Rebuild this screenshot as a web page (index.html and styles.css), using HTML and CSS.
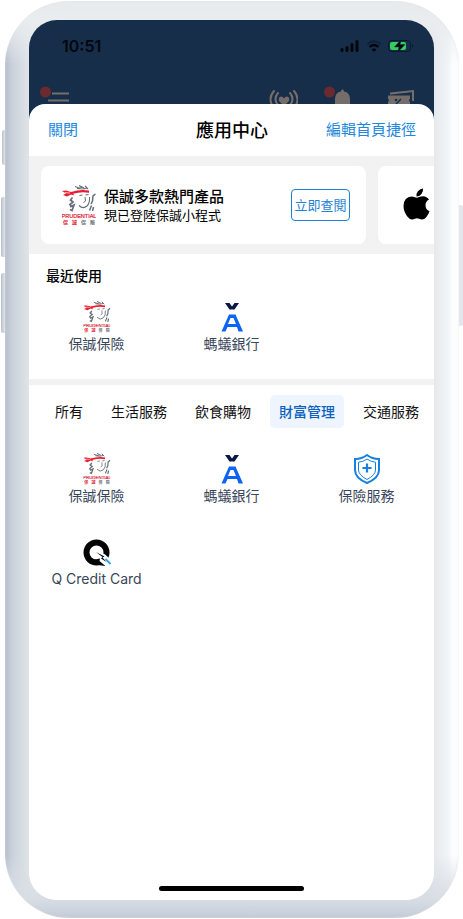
FILE: index.html
```html
<!DOCTYPE html>
<html lang="zh-Hant">
<head>
<meta charset="utf-8">
<meta name="viewport" content="width=device-width, initial-scale=1">
<title>應用中心</title>
<link rel="stylesheet" href="styles.css">
</head>
<body>
<svg class="sprite" aria-hidden="true">
  <symbol id="pru" viewBox="0 0 34 40">
    <g fill="none" stroke="#666e78">
      <path d="M13 1.500l4 1.500 3-.5M17 .5l5 2.500M15 3.500l6 .5 4-1M23 1l3 3" stroke-width="1.200"/>
      <path d="M10.500 12.500l-2 2.500 2.500 2-3 2.500 1 2 3-1.500-2 5.500-2-1" stroke-width="1.700"/>
      <path d="M17.500 10.500l3-.5M23.500 10l3-.5M23 12l.5 4-2 1.500" stroke-width="1"/>
      <path d="M17 20.500q4 4 8 .5 3-3 2.500-9" stroke-width="1.100"/>
      <path d="M33.500 9l-2.500 2-.5 5-1.500 3M29.500 20.500l-2 5M31.500 22l-1 4" stroke-width="1.500"/>
    </g>
    <path d="M0 6l4-.5 5 1.500q9-3 18-1.500v2.300q-8-1.500-16 1l1.500 1.700-3.500-1-4 2-4-1.500 3-1.500z" fill="#ed1b2e"/>
    <path d="M3 7.500l5 .6" stroke="#fff" stroke-width=".7"/>
    <text x="17" y="33" text-anchor="middle" class="pru-name">PRUDENTIAL</text>
    <text x="1" y="38.500" class="pru-sub">保</text>
    <text x="10" y="38.500" class="pru-sub">誠</text>
    <text x="19" y="38.500" class="pru-sub pru-dim">保</text>
    <text x="28" y="38.500" class="pru-sub pru-dim">險</text>
  </symbol>
  <symbol id="ant" viewBox="0 0 32 32">
    <path d="M9 2h4.500l2.500 3.500L18.500 2H23l-4.500 6.500h-5z" fill="#0b1746"/>
    <path fill-rule="evenodd" d="M13 13.500h6.500L27 30.500h-4.500L21 26h-9.500l-2 4.500H5.500zM14.500 17l-2.500 6h8l-2.500-6z" fill="#0d63f3"/>
  </symbol>
</svg>

<div class="phone">
  <span class="key key-mute"></span>
  <span class="key key-up"></span>
  <span class="key key-down"></span>
  <span class="key key-power"></span>
  <div class="screen">
    <div class="backdrop">
      <div class="status">
        <time>10:51</time>
        <div class="status-icons">
          <svg width="20" height="14" viewBox="0 0 20 14"><path d="M2 11.500v-1M7 11.500V8.500M12 11.500V5.500M17 11.500V2.500" stroke="#02070d" stroke-width="3" stroke-linecap="round"/></svg>
          <svg width="16" height="14" viewBox="0 0 16 14"><path d="M1.500 5q6.500-5.500 13 0" fill="none" stroke="#0c2036" stroke-width="2"/><path d="M3.500 8q4.500-4 9 0" fill="none" stroke="#02070d" stroke-width="2.200"/><path d="M5.500 10.500q2.500-2 5 0L8 13z" fill="#02070d"/></svg>
          <svg width="26" height="14" viewBox="0 0 26 14"><rect x=".5" y="1.500" width="22" height="11" rx="3.500" fill="none" stroke="#0a1a2c"/><path d="M24 5q2 2 0 4z" fill="#0a1a2c"/><rect x="2" y="3" width="16" height="8" rx="2" fill="#35cc62"/><path d="M13.500 0L6.500 8h4.500l-1.500 5.500L17 5.500h-5z" fill="#02070d" stroke="#14304c" stroke-width=".5"/></svg>
        </div>
      </div>
      <div class="nav">
        <svg width="30" height="20" viewBox="0 0 30 20"><circle cx="5.500" cy="6" r="5.500" fill="#6b2a2d"/><path d="M12 7.500h17M8 14.500h21" stroke="#746d6a" stroke-width="2"/></svg>
        <svg class="nav-heart" width="30" height="20" viewBox="0 0 30 20"><g fill="none" stroke="#746d6a" stroke-width="2" stroke-linecap="round"><path d="M6 5q-7 8 0 17M10 7q-5 6 0 12M26 5q7 8 0 17M22 7q5 6 0 12"/></g><path d="M16 20l-5-5q-1-4 2-4.500 2 0 3 2 1-2 3-2 3 .5 2 4.500z" fill="#746d6a"/></svg>
        <svg width="37" height="20" viewBox="0 0 37 20"><path d="M17 5.500q0-2 1.500-2t1.500 2q6 1 6 7.500v7H11v-7q0-6.500 6-7.500z" fill="#746d6a"/><circle cx="5.500" cy="6" r="5.500" fill="#6b2a2d"/></svg>
        <svg width="27" height="20" viewBox="0 0 27 20"><path d="M4 8.500V7.500L26 5v10" fill="none" stroke="#746d6a" stroke-width="2"/><path d="M1 9.500h22v3.500q-2 1 0 3v5H1v-5q2-2 0-3z" fill="#746d6a"/><path d="M9 18l5-5" stroke="#162e4a" stroke-width="1.500"/><circle cx="9" cy="14" r="1.300" fill="#162e4a"/></svg>
      </div>
    </div>

    <main class="sheet">
      <header class="bar">
        <button type="button" class="link">關閉</button>
        <h1>應用中心</h1>
        <button type="button" class="link">編輯首頁捷徑</button>
      </header>

      <section class="promos">
        <article class="promo">
          <svg class="promo-logo" viewBox="0 0 34 40"><use href="#pru"/></svg>
          <div class="promo-text">
            <h2>保誠多款熱門產品</h2>
            <p>現已登陸保誠小程式</p>
          </div>
          <button type="button" class="view">立即查閱</button>
        </article>
        <article class="promo promo-next">
          <svg width="28" height="34" viewBox="0 0 28 34"><path d="M20 .5q.5 3-1.500 5.500t-5 2.500q-.5-3 1.500-5.300T20 .5z"/><path d="M26 11.500q-3.500 2-3.500 5.700 0 4.300 4 6-1 3.300-3.300 6Q21.500 31.500 19 31.500q-1.500 0-3-.8-2-.8-4 0-1.500.8-3 .8-2.500 0-4.700-3Q.5 23.500.5 18q0-4.500 2.300-7T8.500 8.500q1.500 0 3.500.8 1.800.8 3.500 0Q18 8.300 20 8.300q4 .2 6 3.200z"/></svg>
        </article>
      </section>

      <section class="recent">
        <h2>最近使用</h2>
        <div class="apps">
          <a class="app" href="#"><svg viewBox="0 0 34 40"><use href="#pru"/></svg><span>保誠保險</span></a>
          <a class="app" href="#"><svg viewBox="0 0 32 32"><use href="#ant"/></svg><span>螞蟻銀行</span></a>
        </div>
      </section>

      <section class="catalog">
        <nav class="tabs">
          <button type="button">所有</button>
          <button type="button">生活服務</button>
          <button type="button">飲食購物</button>
          <button type="button" class="active">財富管理</button>
          <button type="button">交通服務</button>
        </nav>
        <div class="apps">
          <a class="app" href="#"><svg viewBox="0 0 34 40"><use href="#pru"/></svg><span>保誠保險</span></a>
          <a class="app" href="#"><svg viewBox="0 0 32 32"><use href="#ant"/></svg><span>螞蟻銀行</span></a>
          <a class="app" href="#"><svg viewBox="0 0 32 32" fill="none" stroke="#1680dc"><path d="M16 2q5 4 12 4v11q0 8-12 13Q4 25 4 17V6q7 0 12-4z" stroke-width="2"/><path d="M16 6q4 3 8.500 3.200V17q0 5-8.500 9.500Q7.500 22 7.500 17V9.200Q12 9 16 6z"/><path d="M16 10.500v9M11.500 15h9" stroke-width="2.200"/></svg><span>保險服務</span></a>
          <a class="app" href="#"><svg viewBox="0 0 32 32"><circle cx="15.500" cy="15.500" r="10" fill="none" stroke="#050505" stroke-width="6"/><path d="M12 15l6-1 6 3.500 8 7-3 5-10 2z" fill="#fff"/><path d="M15 15l8.500 4.500-2 1 4 4.500-5.500-3.500 1.500-1.500z" fill="#050505"/><path d="M14 22.500l5-1-.5 2.500 6 5-8-1z" fill="#050505"/><path d="M24.500 22l5 5" stroke="#27a9e8" stroke-width="1.800"/></svg><span class="latin">Q Credit Card</span></a>
        </div>
      </section>
      <div class="home"></div>
    </main>
  </div>
</div>
</body>
</html>
```

FILE: styles.css
```css
* { box-sizing: border-box; }

body {
  margin: 0;
  background: #fff;
  color: #000;
  font-family: "Noto Sans CJK TC", sans-serif;
}

h1, h2, p { margin: 0; }

button {
  padding: 0;
  border: 0;
  background: none;
  font-family: inherit;
}

svg { flex: none; display: block; }

.sprite { display: none; }

.pru-name { font: 5.5px "Liberation Sans", sans-serif; fill: #e0182d; stroke: #e0182d; stroke-width: .2px; }
.pru-sub { font: 700 5px "Noto Sans CJK TC", sans-serif; fill: #e0182d; }
.pru-dim { fill: #68707a; }

/* Device body */
.phone {
  position: relative;
  display: flex;
  min-height: calc(100vh - 2px);
  margin: 1px 4px 0 5px;
  padding: 19px 25px 18px 24px;
  border-radius: 64px;
  background:
    linear-gradient(to bottom, #e6eaed, #e9edef 18px, transparent 64px),
    linear-gradient(to top, #c3cad6, #ccd3dd 7px, #d9dee5 20px, transparent 64px),
    linear-gradient(to right, #b5bdc9, #c8ced8 6px, #cbd2db 8px, #e0e4e9 24px, #e5e9ec calc(100% - 25px), #f3f6f7 calc(100% - 10px), #fdfefe calc(100% - 6px), #fdfdfe);
  box-shadow: inset 0 0 2px #dfe3ea;
}

.key {
  position: absolute;
  left: -4px;
  width: 4px;
  height: 60px;
  border-radius: 2px 0 0 2px;
  background: linear-gradient(to right, #b8c0cb, #e1e5eb);
}
.key-mute { top: 129px; left: -3px; width: 3px; height: 35px; }
.key-up { top: 196px; }
.key-down { top: 272px; }
.key-power { top: 204px; right: -4px; left: auto; height: 121px; background: #e3e7ec; border-radius: 0 2px 2px 0; }

.screen {
  display: flex;
  flex: 1;
  flex-direction: column;
  min-width: 0;
  overflow: hidden;
  border-radius: 28px;
  background: linear-gradient(#162e4a 50%, #fff 50%);
}

/* Dimmed page behind the sheet */
.backdrop { height: 84px; overflow: hidden; }

.status {
  display: flex;
  align-items: center;
  justify-content: space-between;
  padding: 16px 20px 0 33px;
}
.status time { font: 600 16px/20px Inter, sans-serif; color: #02070d; }
.status-icons { display: flex; align-items: center; gap: 6px; }

.nav {
  display: flex;
  gap: 26px;
  padding: 30px 20px 0 11px;
}
.nav-heart { margin-left: auto; }

/* Sheet */
.sheet {
  display: flex;
  flex: 1;
  flex-direction: column;
  overflow: hidden;
  border-radius: 16px 16px 0 0;
  background: #fff;
}

.bar {
  display: grid;
  grid-template-columns: 1fr auto 1fr;
  align-items: center;
  height: 52px;
  padding: 0 18px 2px 19px;
}
.bar h1 { font-size: 18px; font-weight: 500; line-height: 24px; }
.link { justify-self: start; font-size: 15px; line-height: 20px; color: #1e88dc; }
.link:last-child { justify-self: end; }

.promos {
  display: flex;
  gap: 12px;
  padding: 10px 0 10px 12px;
  overflow: hidden;
  background: #f2f2f3;
}
.promo {
  display: flex;
  flex: 0 0 calc(100% - 68px);
  align-items: center;
  height: 78px;
  padding: 0 16px 0 21px;
  border-radius: 8px;
  background: #fff;
}
.promo-next { padding-left: 25px; }
.promo-logo { width: 34px; height: 40px; }
.promo-text { flex: 1; margin-left: 8px; }
.promo-text h2 { font-size: 15px; font-weight: 500; line-height: 20px; }
.promo-text p { font-size: 13px; line-height: 18px; }
.view {
  width: 59px;
  height: 32px;
  padding-bottom: 2px;
  border: 1px solid #1e82d4;
  border-radius: 4px;
  font-size: 13px;
  color: #1e82d4;
}

.recent {
  height: 131px;
  padding-top: 11px;
  border-bottom: 6px solid #f2f2f3;
}
.recent h2 {
  margin-bottom: 16px;
  padding-left: 17px;
  font-size: 14px;
  font-weight: 500;
  line-height: 20px;
}

.apps {
  display: grid;
  grid-template-columns: repeat(3, 1fr);
  row-gap: 32px;
}
.app {
  display: flex;
  flex-direction: column;
  align-items: center;
  font-size: 14px;
  line-height: 20px;
  color: #39465a;
  text-decoration: none;
}
.app svg { width: 32px; height: 32px; }
.latin { font-family: Inter, sans-serif; }

.catalog { flex: 1; padding-top: 10px; }
.tabs {
  display: flex;
  gap: 10px;
  margin-bottom: 25px;
  padding: 0 5px 0 17px;
  overflow: hidden;
}
.tabs button {
  flex: none;
  height: 33px;
  padding: 0 9px 2px;
  border-radius: 5px;
  font-size: 14px;
  color: #111;
}
.tabs .active { background: #eff5ff; color: #0d62bd; font-weight: 500; }

.home {
  align-self: center;
  width: 145px;
  height: 5px;
  margin-bottom: 9px;
  border-radius: 3px;
  background: #000;
}
```
